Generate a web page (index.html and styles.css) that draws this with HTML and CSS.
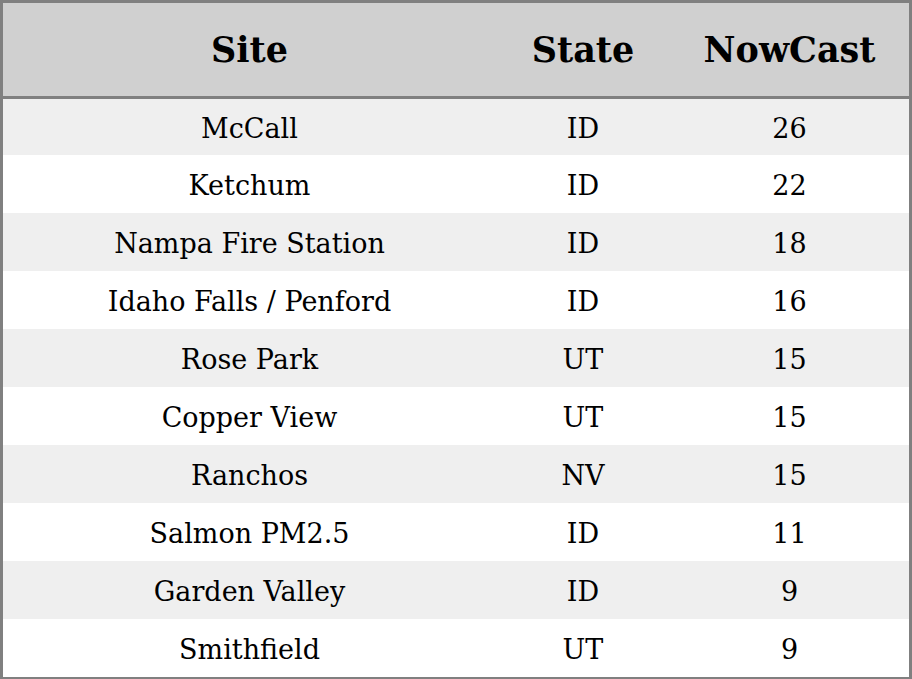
FILE: index.html
```html
<!DOCTYPE html>
<html>
<head>
<meta charset="utf-8">
<link rel="stylesheet" href="styles.css">
</head>
<body>
<table class="aq">
  <thead>
    <tr><th class="c-site">Site</th><th class="c-state">State</th><th class="c-now">NowCast</th></tr>
  </thead>
  <tbody>
    <tr class="first"><td>McCall</td><td>ID</td><td>26</td></tr>
    <tr><td>Ketchum</td><td>ID</td><td>22</td></tr>
    <tr><td>Nampa Fire Station</td><td>ID</td><td>18</td></tr>
    <tr><td>Idaho Falls / Penford</td><td>ID</td><td>16</td></tr>
    <tr><td>Rose Park</td><td>UT</td><td>15</td></tr>
    <tr><td>Copper View</td><td>UT</td><td>15</td></tr>
    <tr><td>Ranchos</td><td>NV</td><td>15</td></tr>
    <tr><td>Salmon PM2.5</td><td>ID</td><td>11</td></tr>
    <tr><td>Garden Valley</td><td>ID</td><td>9</td></tr>
    <tr><td>Smithfield</td><td>UT</td><td>9</td></tr>
  </tbody>
</table>
</body>
</html>
```
FILE: styles.css
```css
html, body {
  margin: 0;
  padding: 0;
  background: #ffffff;
}
.aq {
  width: 912px;
  border: 3px solid #808080;
  border-collapse: separate;
  border-spacing: 0;
  table-layout: fixed;
  font-family: "DejaVu Serif", serif;
  color: #000;
}
.aq th {
  background: #d0d0d0;
  height: 93px;
  padding: 0;
  font-size: 35px;
  font-weight: bold;
  text-align: center;
  border-bottom: 3px solid #808080;
}
.c-site { width: 493px; }
.c-state { width: 174px; }
.c-now { width: 239px; }
.aq tbody tr { height: 58px; }
.aq tbody tr.first { height: 56px; }
.aq td {
  padding: 2px 0 0 0;
  text-align: center;
  vertical-align: middle;
  font-size: 27px;
}
.aq tbody tr:nth-child(odd) td { background: #efefef; }
.aq tbody tr:nth-child(even) td { background: #ffffff; }
```
